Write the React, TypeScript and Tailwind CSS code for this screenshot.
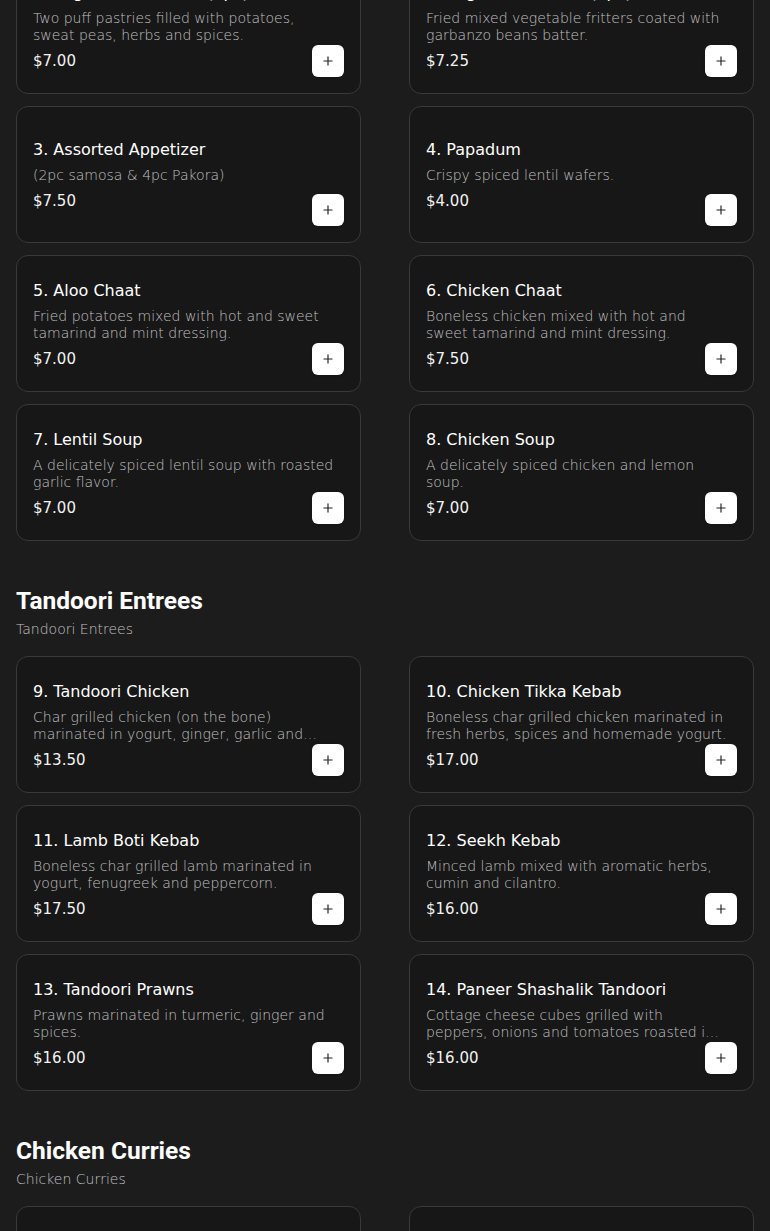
import { Plus } from "lucide-react";

type Item = {
  name: string;
  desc: string;
  price: string;
};

type Section = {
  title: string;
  subtitle: string;
  items: Item[];
};

const SECTIONS: Section[] = [
  {
    title: "Appetizers",
    subtitle: "Appetizers",
    items: [
      { name: "1. Vegetable Samosa (2pc)", desc: "Two puff pastries filled with potatoes, sweat peas, herbs and spices.", price: "$7.00" },
      { name: "2. Vegetable Pakora (6pc)", desc: "Fried mixed vegetable fritters coated with garbanzo beans batter.", price: "$7.25" },
      { name: "3. Assorted Appetizer", desc: "(2pc samosa & 4pc Pakora)", price: "$7.50" },
      { name: "4. Papadum", desc: "Crispy spiced lentil wafers.", price: "$4.00" },
      { name: "5. Aloo Chaat", desc: "Fried potatoes mixed with hot and sweet tamarind and mint dressing.", price: "$7.00" },
      { name: "6. Chicken Chaat", desc: "Boneless chicken mixed with hot and sweet tamarind and mint dressing.", price: "$7.50" },
      { name: "7. Lentil Soup", desc: "A delicately spiced lentil soup with roasted garlic flavor.", price: "$7.00" },
      { name: "8. Chicken Soup", desc: "A delicately spiced chicken and lemon soup.", price: "$7.00" },
    ],
  },
  {
    title: "Tandoori Entrees",
    subtitle: "Tandoori Entrees",
    items: [
      { name: "9. Tandoori Chicken", desc: "Char grilled chicken (on the bone) marinated in yogurt, ginger, garlic and spices.", price: "$13.50" },
      { name: "10. Chicken Tikka Kebab", desc: "Boneless char grilled chicken marinated in fresh herbs, spices and homemade yogurt.", price: "$17.00" },
      { name: "11. Lamb Boti Kebab", desc: "Boneless char grilled lamb marinated in yogurt, fenugreek and peppercorn.", price: "$17.50" },
      { name: "12. Seekh Kebab", desc: "Minced lamb mixed with aromatic herbs, cumin and cilantro.", price: "$16.00" },
      { name: "13. Tandoori Prawns", desc: "Prawns marinated in turmeric, ginger and spices.", price: "$16.00" },
      { name: "14. Paneer Shashalik Tandoori", desc: "Cottage cheese cubes grilled with peppers, onions and tomatoes roasted in tandoor oven.", price: "$16.00" },
    ],
  },
  {
    title: "Chicken Curries",
    subtitle: "Chicken Curries",
    items: [
      { name: "15. Chicken Tikka Masala", desc: "Tandoori chicken breast cooked in a creamy tomato sauce.", price: "$17.00" },
      { name: "16. Butter Chicken", desc: "Tender chicken cooked in a rich butter and tomato gravy.", price: "$17.00" },
    ],
  },
];

function MenuCard({ item }: { item: Item }) {
  return (
    <div className="flex items-center h-[137px] p-4 bg-[#171717] border border-[#393939] rounded-xl">
      <div className="flex-1 min-w-0 mr-[-22px]">
        <h3 className="text-[16px] leading-7 text-white font-['DejaVu_Sans',sans-serif] truncate">
          {item.name}
        </h3>
        <p className="mt-[3px] text-[14px] leading-[17px] font-light text-[#c0c0c0] line-clamp-2 font-['DejaVu_Sans',sans-serif]">
          {item.desc}
        </p>
        <div className="mt-[5px] text-[15px] leading-6 text-[#f2f2f2] font-['DejaVu_Sans',sans-serif]">
          {item.price}
        </div>
      </div>
      <button className="self-end shrink-0 w-8 h-8 flex items-center justify-center bg-white rounded-md shadow-sm text-[#222]">
        <Plus size={14} strokeWidth={2} />
      </button>
    </div>
  );
}

export default function App() {
  return (
    <div className="h-screen overflow-hidden bg-[#1c1c1c]">
      <div className="mt-[-158px] px-4">
        {SECTIONS.map((section) => (
          <section key={section.title} className="pt-11">
            <h2 className="text-[24.5px] leading-8 font-bold text-white font-['Roboto',sans-serif]">
              {section.title}
            </h2>
            <p className="text-[14px] leading-6 font-light text-[#c0c0c0] mb-[15px] font-['DejaVu_Sans',sans-serif]">
              {section.subtitle}
            </p>
            <div className="grid grid-cols-2 gap-x-12 gap-y-3">
              {section.items.map((item) => (
                <MenuCard key={item.name} item={item} />
              ))}
            </div>
          </section>
        ))}
      </div>
    </div>
  );
}
